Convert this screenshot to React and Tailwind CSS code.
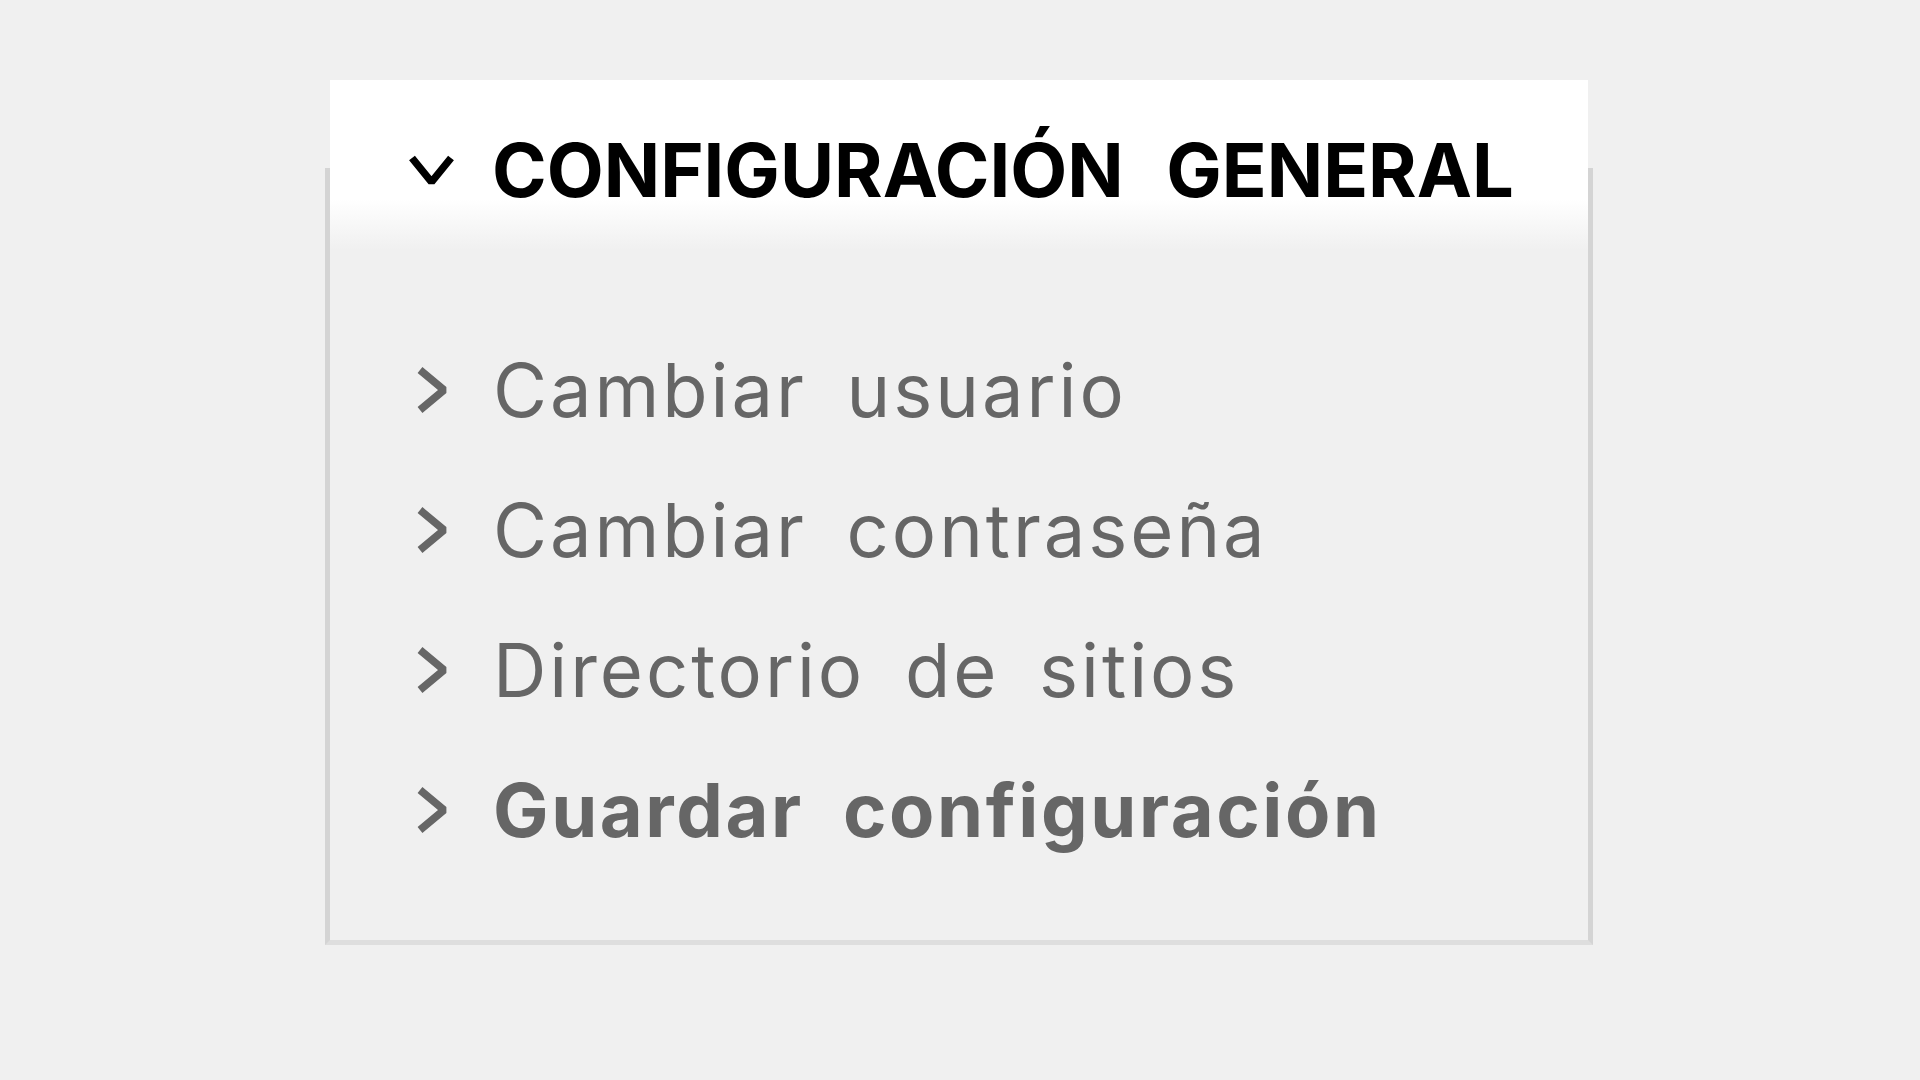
const items = [
  { label: 'Cambiar usuario', bold: false },
  { label: 'Cambiar contraseña', bold: false },
  { label: 'Directorio de sitios', bold: false },
  { label: 'Guardar configuración', bold: true },
];

const ChevronDown = () => (
  <svg width="47" height="34" viewBox="0 0 47 34" className="shrink-0">
    <polyline points="4,5 23.5,29 43,5" fill="none" stroke="#000" strokeWidth="7.5" strokeLinejoin="bevel" />
  </svg>
);

const ChevronRight = () => (
  <svg width="33" height="48" viewBox="0 0 33 48" className="shrink-0">
    <polyline points="4,4 28,24 4,44" fill="none" stroke="#666" strokeWidth="7.5" strokeLinejoin="bevel" />
  </svg>
);

export default function App() {
  return (
    <div className="min-h-screen bg-[#f0f0f0] pt-[168px] pl-[325px] font-['Inter',sans-serif]">
      <div className="flex w-[1268px] flex-col border-x-[5px] border-b-[5px] border-x-[#d4d4d4] border-b-[#dedede]">
        {/* Header */}
        <div className="-mt-[88px] h-[170px] bg-linear-to-b from-white from-70% to-[#f0f0f0] pt-[45px] pl-[78px]">
          <div className="flex items-center gap-[37px]">
            <ChevronDown />
            <h2 className="text-[74px] leading-[90px] font-bold tracking-normal [word-spacing:25px] text-black">
              CONFIGURACIÓN GENERAL
            </h2>
          </div>
        </div>

        {/* Options */}
        <ul className="pt-[70px] pb-[60px]">
          {items.map((item) => (
            <li key={item.label} className="flex h-[140px] items-center gap-[44px] pl-[86px]">
              <ChevronRight />
              <span
                className={`text-[74px] leading-[140px] text-[#666] ${
                  item.bold
                    ? 'font-bold tracking-[0.035em] [word-spacing:19px]'
                    : 'font-normal tracking-[0.04em] [word-spacing:16px]'
                }`}
              >
                {item.label}
              </span>
            </li>
          ))}
        </ul>
      </div>
    </div>
  );
}
